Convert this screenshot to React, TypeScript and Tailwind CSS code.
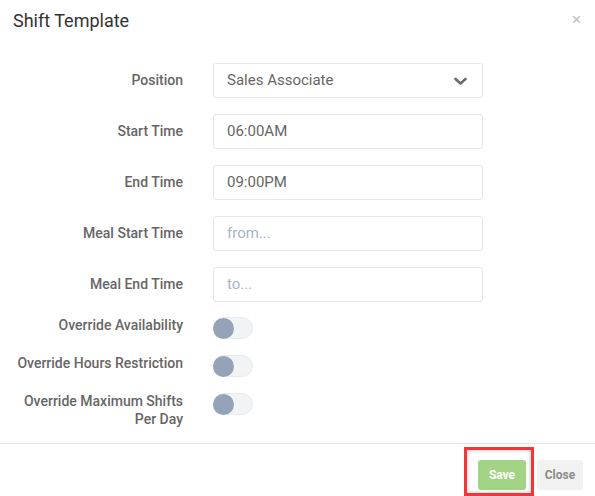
import React from 'react';

const inputRows = [
  { label: 'Start Time', value: '06:00AM' },
  { label: 'End Time', value: '09:00PM' },
  { label: 'Meal Start Time', placeholder: 'from...' },
  { label: 'Meal End Time', placeholder: 'to...' },
];

const toggleRows = [
  ['Override Availability'],
  ['Override Hours Restriction'],
  ['Override Maximum Shifts', 'Per Day'],
];

const Toggle: React.FC = () => (
  <div className="w-[40px] h-[22px] rounded-full bg-[#f1f3f5] border border-[#e9ecef] flex items-center">
    <div className="w-[21px] h-[21px] rounded-full bg-[#94a3b8] -ml-px" />
  </div>
);

export default function App() {
  return (
    <div className="w-[595px] h-[496px] bg-white text-[#666] overflow-hidden" style={{ fontFamily: 'Roboto, "Liberation Sans", sans-serif' }}>
      {/* header */}
      <div className="flex items-start justify-between h-[48px] pl-[13px] pr-[14px] pt-[9px]">
        <h2 className="text-[18px] leading-[24px] font-normal text-[#333]">Shift Template</h2>
        <span className="text-[17px] leading-[20px] text-[#c4c4c4]">×</span>
      </div>

      {/* body */}
      <div className="pt-[15px] pl-[13px]">
        <div className="flex items-center">
          <div className="w-[170px] text-right text-[14px] font-medium">Position</div>
          <div className="ml-[30px] w-[270px] h-[35px] border border-[#e6e6e6] rounded-[3px] flex items-center justify-between pl-[13px] pr-[15px] text-[15px] text-[#666]">
            <span>Sales Associate</span>
            <svg width="13" height="9" viewBox="0 0 13 9" className="mt-[1px]">
              <path d="M1.5 2 L6.5 6.5 L11.5 2" fill="none" stroke="#6b6b6b" strokeWidth="2.6" strokeLinecap="round" strokeLinejoin="round" />
            </svg>
          </div>
        </div>

        {inputRows.map((row) => (
          <div key={row.label} className="flex items-center mt-[16px]">
            <div className="w-[170px] text-right text-[14px] font-medium">{row.label}</div>
            <div className="ml-[30px] w-[270px] h-[35px] border border-[#e6e6e6] rounded-[3px] flex items-center pl-[13px] text-[15px]">
              {row.value ? (
                <span className="text-[#666]">{row.value}</span>
              ) : (
                <span className="text-[#a8b4c6]">{row.placeholder}</span>
              )}
            </div>
          </div>
        ))}

        <div className="mt-[14px] flex flex-col gap-[15px]">
          {toggleRows.map((lines) => (
            <div key={lines[0]} className="flex items-start">
              <div className="w-[170px] text-right text-[14px] font-medium leading-[18px]">
                {lines.map((l) => (
                  <div key={l}>{l}</div>
                ))}
              </div>
              <div className="ml-[30px] mt-[1px]">
                <Toggle />
              </div>
            </div>
          ))}
        </div>
      </div>

      {/* footer */}
      <div className="mt-[15px] border-t border-[#e5e5e5] flex justify-end gap-[11px] pt-[16px] pr-[12px]">
        <div className="relative">
          <button className="w-[48px] h-[30px] rounded-[3px] bg-[#a3d485] text-white text-[12px] font-bold">Save</button>
          <div className="absolute -left-[14px] -top-[13px] w-[70px] h-[49px] border-[3px] border-[#f0353b] shadow-[inset_0_0_4px_rgba(0,0,0,0.25)] pointer-events-none" />
        </div>
        <button className="w-[46px] h-[30px] rounded-[3px] bg-[#f2f2f2] text-[#8a8a8a] text-[12px] font-bold">Close</button>
      </div>
    </div>
  );
}
